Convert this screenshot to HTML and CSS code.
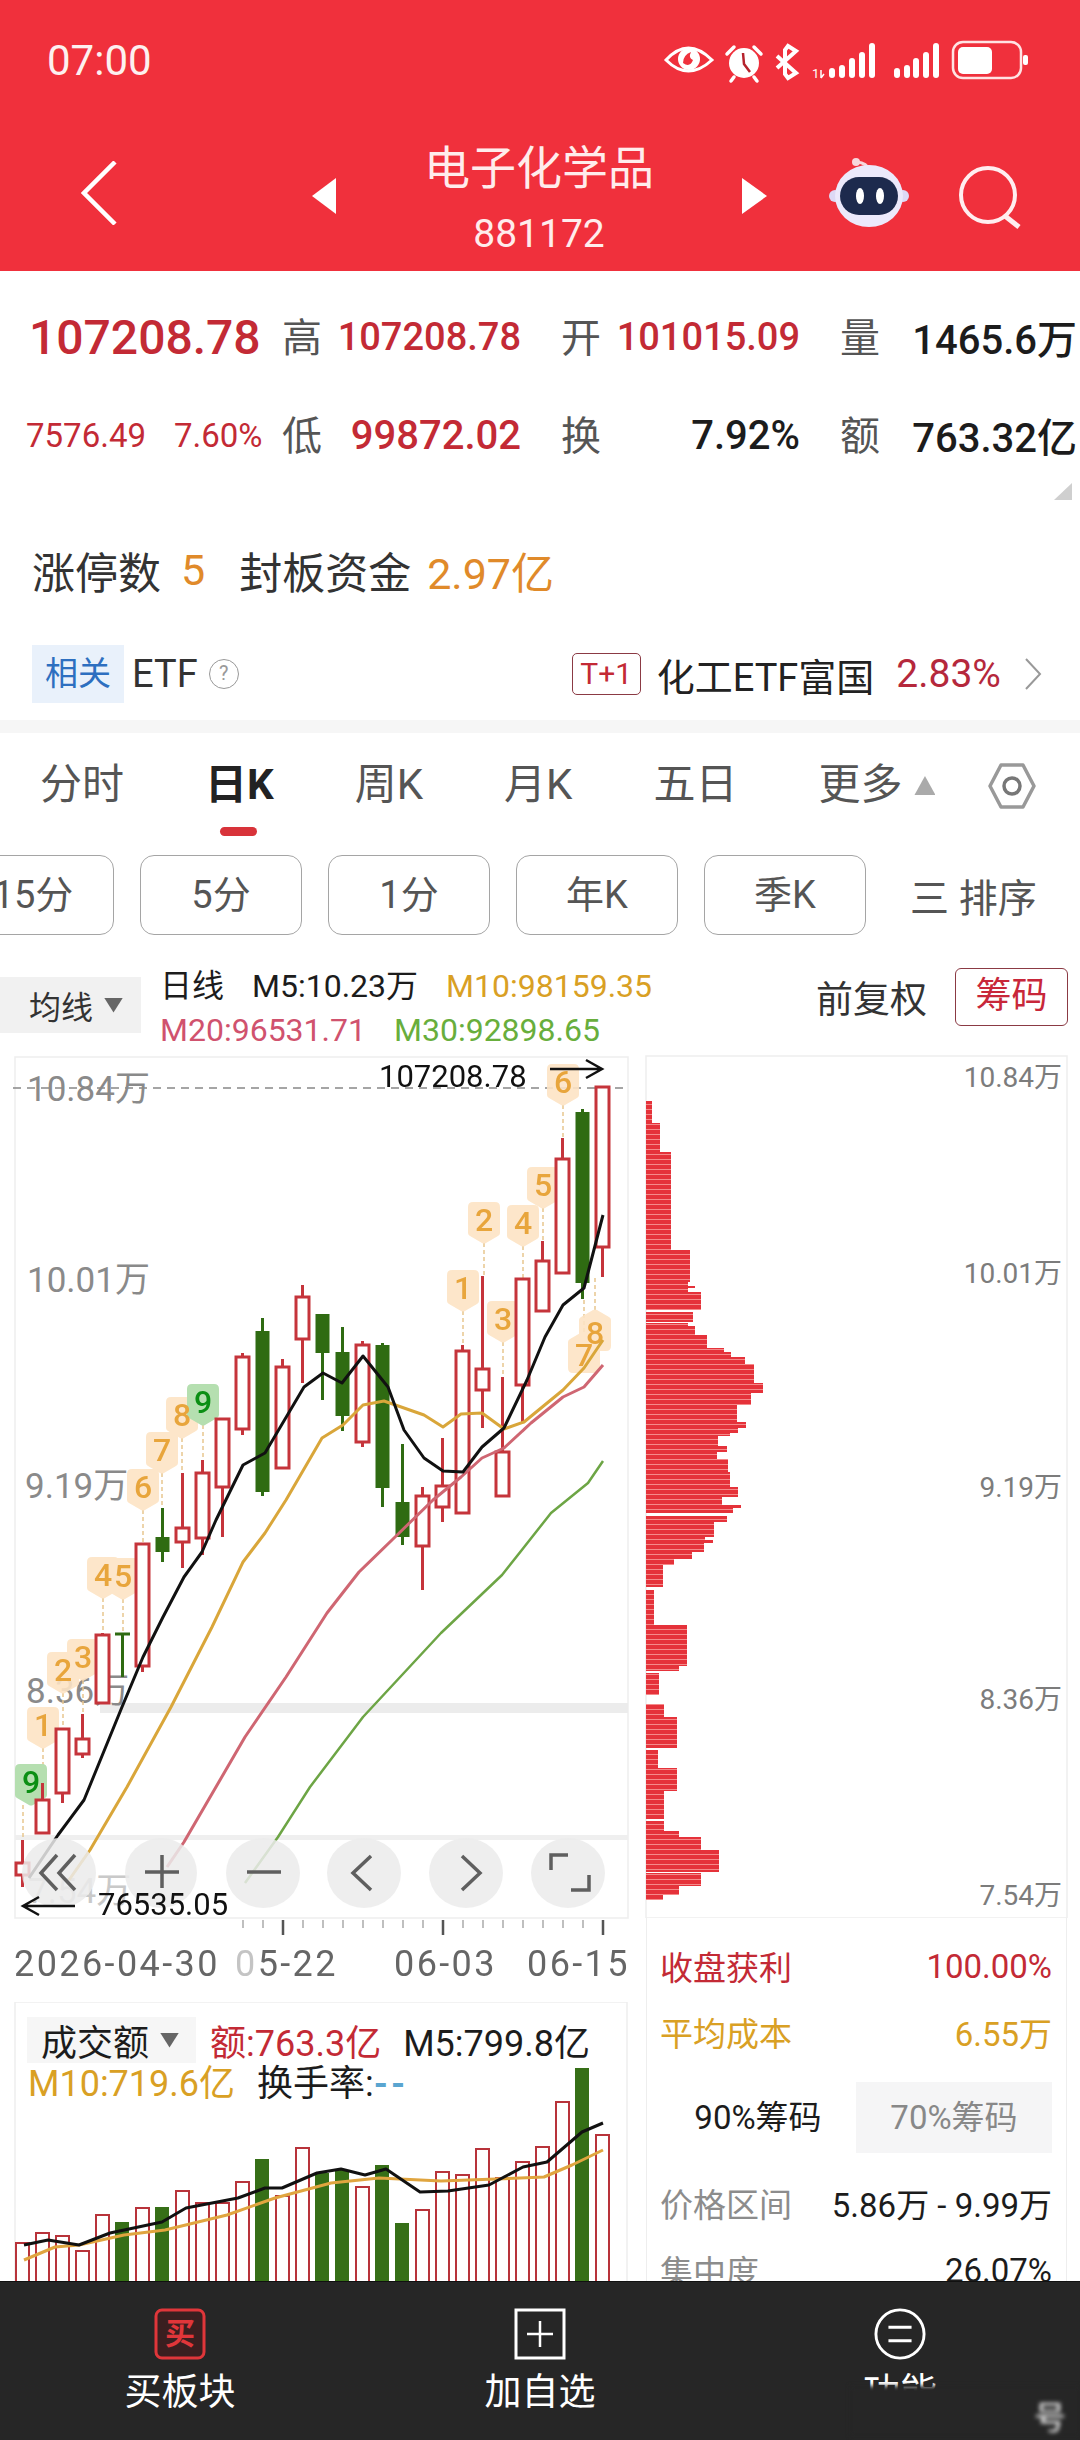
FILE: index.html
```html
<!DOCTYPE html>
<html lang="zh-CN">
<head>
  <meta charset="UTF-8" />
  <meta name="viewport" content="width=device-width, initial-scale=1.0" />
  <title>电子化学品 881172</title>
  <link rel="stylesheet" href="styles.css">
</head>
<body>
  <div class="pantalla">
    <header class="cabecera">
      <div class="estado">
        <span class="hora">07:00</span>
        <svg class="estado-iconos" width="400" height="60" viewBox="0 0 400 60">
          <path d="M16 30Q38 6 62 30Q38 52 16 30z" fill="none" stroke="#fff" stroke-width="3"/>
          <circle cx="39" cy="29" r="11" fill="#fff"/>
          <path d="M33 33q0-8 8-11q-3 6 2 8q-3 8-10 3z" fill="#f0303c"/>
          <path d="M77 24l7-7M111 24l-7-7M84 47l-3 4M104 47l3 4" stroke="#fff" stroke-width="3.5" stroke-linecap="round"/>
          <circle cx="94" cy="33" r="15" fill="#fff"/>
          <path d="M93 23l1 11l6 8" fill="none" stroke="#b5222c" stroke-width="2.5"/>
          <path d="M127 26l19 17l-8 5l-3-4v-24l3-4l8 5l-19 17" fill="none" stroke="#fff" stroke-width="4"/>
          <text x="162" y="48" class="red-chica">1</text>
          <path d="M171 40v8M174 44l-3 4" stroke="#fff" stroke-width="1.5" fill="none"/>
          <g fill="#fff">
            <rect x="179" y="38" width="6" height="10" rx="3"/>
            <rect x="189" y="35" width="6" height="13" rx="3"/>
            <rect x="199" y="28" width="6" height="20" rx="3"/>
            <rect x="209" y="22" width="6" height="26" rx="3"/>
            <rect x="219" y="13" width="6" height="35" rx="3"/>
            <rect x="244" y="38" width="6" height="10" rx="3"/>
            <rect x="254" y="35" width="6" height="13" rx="3"/>
            <rect x="263" y="28" width="6" height="20" rx="3"/>
            <rect x="273" y="22" width="6" height="26" rx="3"/>
            <rect x="283" y="13" width="6" height="35" rx="3"/>
            <rect x="308" y="17" width="34" height="27" rx="5"/>
            <rect x="373" y="25" width="5" height="10" rx="2"/>
          </g>
          <rect x="303" y="12" width="68" height="36" rx="10" fill="none" stroke="#ffe3e3" stroke-width="2.5"/>
        </svg>
      </div>
      <nav class="barra">
        <svg class="volver" width="36" height="64" viewBox="0 0 36 64">
          <path d="M34 1L3 32L34 63" fill="none" stroke="#fff" stroke-width="4.5"/>
        </svg>
        <span class="flecha flecha-izq"></span>
        <div class="titulo">
          <div class="titulo-nombre">电子化学品</div>
          <div class="titulo-codigo">881172</div>
        </div>
        <span class="flecha flecha-der"></span>
        <svg class="robot" width="80" height="72" viewBox="0 0 80 72">
          <path d="M40 12q-2-7-12-8" fill="none" stroke="#f7d7dd" stroke-width="3"/>
          <circle cx="27" cy="4" r="4" fill="#f7d7dd"/>
          <circle cx="6" cy="38" r="6" fill="#ddd9f5"/>
          <circle cx="74" cy="38" r="6" fill="#ddd9f5"/>
          <ellipse cx="40" cy="38" rx="34" ry="31" fill="#ece9fb"/>
          <rect x="11" y="19" width="58" height="38" rx="19" fill="#1d2a4d"/>
          <ellipse cx="31" cy="38" rx="4" ry="8" fill="#fff"/>
          <ellipse cx="51" cy="38" rx="4" ry="8" fill="#fff"/>
        </svg>
        <svg class="buscar" width="64" height="64" viewBox="0 0 64 64">
          <circle cx="29" cy="30" r="27" fill="none" stroke="#ffeef0" stroke-width="4"/>
          <path d="M46 51l14 11" stroke="#ffeef0" stroke-width="5"/>
        </svg>
      </nav>
    </header>

    <section class="cotizacion">
      <div class="fila-cot">
        <div class="precio">107208.78</div>
        <span class="et">高</span><b class="val rojo">107208.78</b><i></i>
        <span class="et">开</span><b class="val rojo">101015.09</b><i></i>
        <span class="et">量</span><b class="val negro val-g">1465.6万</b>
      </div>
      <div class="fila-cot fila-cot-2">
        <div class="cambio"><span>7576.49</span><span>7.60%</span></div>
        <span class="et">低</span><b class="val rojo val-g">99872.02</b><i></i>
        <span class="et">换</span><b class="val negro val-g">7.92%</b><i></i>
        <span class="et">额</span><b class="val negro val-g">763.32亿</b>
      </div>
      <div class="esquina"></div>
      <div class="limite">
        <span>涨停数</span><span class="naranja num-limite">5</span>
        <span class="fondos">封板资金</span><span class="naranja">2.97亿</span>
      </div>
      <div class="etf">
        <span class="etf-tag">相关</span>
        <span class="etf-txt">ETF</span>
        <span class="ayuda">?</span>
        <span class="t1">T+1</span>
        <span class="etf-nombre">化工ETF富国</span>
        <span class="etf-pct">2.83%</span>
        <svg width="18" height="32" viewBox="0 0 18 32">
          <path d="M2 1l14 15L2 31" fill="none" stroke="#999" stroke-width="2"/>
        </svg>
      </div>
    </section>

    <div class="separador"></div>

    <div class="tabs">
      <span>分时</span>
      <span class="tab-activa">日K</span>
      <span>周K</span>
      <span>月K</span>
      <span>五日</span>
      <span>更多</span>
      <span class="tri-mas"></span>
      <svg class="hexagono" width="48" height="46" viewBox="0 0 48 46">
        <path d="M13 2h22l11 21l-11 21H13L2 23z" fill="none" stroke="#999" stroke-width="3.5" stroke-linejoin="round"/>
        <circle cx="24" cy="23" r="8" fill="none" stroke="#777" stroke-width="3.5"/>
      </svg>
    </div>

    <div class="periodos">
      <span class="boton">15分</span>
      <span class="boton">5分</span>
      <span class="boton">1分</span>
      <span class="boton">年K</span>
      <span class="boton">季K</span>
      <span class="orden">三 排序</span>
    </div>

    <div class="leyenda">
      <div class="junxian">均线<span class="tri-abajo"></span></div>
      <div class="leyenda-ma">
        <div><span class="ma-nombre">日线</span><span>M5:10.23万</span><span class="oro">M10:98159.35</span></div>
        <div><span class="rosa">M20:96531.71</span><span class="verde">M30:92898.65</span></div>
      </div>
      <span class="fuquan">前复权</span>
      <span class="chouma">筹码</span>
    </div>

    <div class="graficos">
      <div class="col-izq">
        <svg class="kline" width="640" height="930" viewBox="0 1055 640 930">
          <defs>
            <path id="tag" d="M-16-13q0-5 5-5h22q5 0 5 5v26q0 2-2 3l-12 7q-2 1-4 0l-12-7q-2-1-2-3z"/>
          </defs>
          <rect x="15" y="1057" width="613" height="861" fill="none" stroke="#eee" stroke-width="1.5"/>
          <rect x="100" y="1703" width="528" height="10" fill="#ececec"/>
          <rect x="15" y="1835" width="613" height="5" fill="#efefef"/>
          <path d="M13 1088H628" stroke="#888" stroke-width="1.5" stroke-dasharray="8 6"/>

          <text class="eje" x="27" y="1101">10.84万</text>
          <text class="eje" x="27" y="1292">10.01万</text>
          <text class="eje" x="25" y="1498">9.19万</text>
          <text class="eje" x="26" y="1703">8.36万</text>
          <text class="eje eje-tenue" x="28" y="1903">7.54万</text>

          <path class="guia" d="M563 1105V1138M484 1243V1276M523 1246V1279M543 1208V1241M463 1311V1345M503 1342V1377M584 1332V1299M595 1310V1277M203 1425V1460M182 1438V1473M162 1473V1508M143 1510V1544M103 1598V1633M123 1599V1634M83 1680V1714M63 1693V1729M43 1748V1783M23 1805V1840"/>

          <g class="tag">
            <use href="#tag" x="563" y="1082"/>
            <use href="#tag" x="484" y="1220"/>
            <use href="#tag" x="523" y="1223"/>
            <use href="#tag" x="543" y="1185"/>
            <use href="#tag" x="463" y="1288"/>
            <use href="#tag" x="503" y="1319"/>
            <use href="#tag" transform="translate(584 1355) scale(1 -1)"/>
            <use href="#tag" transform="translate(595 1333) scale(1 -1)"/>
            <use href="#tag" x="182" y="1415"/>
            <use href="#tag" x="162" y="1450"/>
            <use href="#tag" x="143" y="1487"/>
            <use href="#tag" x="103" y="1575"/>
            <use href="#tag" x="123" y="1576"/>
            <use href="#tag" x="83" y="1657"/>
            <use href="#tag" x="63" y="1670"/>
            <use href="#tag" x="43" y="1725"/>
          </g>
          <g class="tag-v">
            <use href="#tag" x="203" y="1402"/>
            <use href="#tag" x="31" y="1782"/>
          </g>
          <g class="tag-num">
            <text x="563" y="1093">6</text>
            <text x="484" y="1231">2</text>
            <text x="523" y="1234">4</text>
            <text x="543" y="1196">5</text>
            <text x="463" y="1299">1</text>
            <text x="503" y="1330">3</text>
            <text x="584" y="1366">7</text>
            <text x="595" y="1344">8</text>
            <text x="182" y="1426">8</text>
            <text x="162" y="1461">7</text>
            <text x="143" y="1498">6</text>
            <text x="103" y="1586">4</text>
            <text x="123" y="1587">5</text>
            <text x="83" y="1668">3</text>
            <text x="63" y="1681">2</text>
            <text x="43" y="1736">1</text>
          </g>
          <g class="tag-num tag-num-v">
            <text x="203" y="1413">9</text>
            <text x="31" y="1793">9</text>
          </g>

          <path class="mecha-r" d="M22.5 1840V1887M42.5 1783V1833M62.5 1793V1803M82.5 1714V1758M102.5 1633V1703M142.5 1666V1672M182.5 1473V1568M202.5 1460V1555M222.5 1487V1537M242.5 1353V1435M282.5 1359V1468M302.5 1285V1383M362.5 1341V1447M422.5 1487V1590M442.5 1438V1522M462.5 1345V1513M482.5 1276V1428M502.5 1377V1496M522.5 1279V1422M542.5 1241V1311M562.5 1138V1273M602.5 1247V1277"/>
          <path class="mecha-v" d="M122.5 1634V1677M115 1634H130M162.5 1508V1562M262.5 1318V1496M322.5 1353V1400M342.5 1327V1431M382.5 1343V1507M402.5 1444V1545M582.5 1109V1299"/>
          <g class="vela-r">
            <rect x="16" y="1863" width="13" height="12"/>
            <rect x="36" y="1800" width="13" height="33"/>
            <rect x="56" y="1729" width="13" height="64"/>
            <rect x="76" y="1739" width="13" height="15"/>
            <rect x="96" y="1635" width="13" height="68"/>
            <rect x="136" y="1544" width="13" height="122"/>
            <rect x="176" y="1528" width="13" height="14"/>
            <rect x="196" y="1473" width="13" height="65"/>
            <rect x="216" y="1419" width="13" height="68"/>
            <rect x="236" y="1357" width="13" height="72"/>
            <rect x="276" y="1367" width="13" height="101"/>
            <rect x="296" y="1297" width="13" height="42"/>
            <rect x="356" y="1345" width="13" height="97"/>
            <rect x="416" y="1496" width="13" height="50"/>
            <rect x="436" y="1486" width="13" height="21"/>
            <rect x="456" y="1351" width="13" height="162"/>
            <rect x="476" y="1369" width="13" height="21"/>
            <rect x="496" y="1452" width="13" height="44"/>
            <rect x="516" y="1279" width="13" height="106"/>
            <rect x="536" y="1261" width="13" height="50"/>
            <rect x="556" y="1159" width="13" height="114"/>
            <rect x="596" y="1087" width="13" height="160"/>
          </g>
          <g class="vela-v">
            <rect x="155.5" y="1537" width="14" height="15"/>
            <rect x="255.5" y="1331" width="14" height="161"/>
            <rect x="315.5" y="1314" width="14" height="39"/>
            <rect x="335.5" y="1352" width="14" height="64"/>
            <rect x="375.5" y="1345" width="14" height="143"/>
            <rect x="395.5" y="1502" width="14" height="35"/>
            <rect x="575.5" y="1112" width="14" height="171"/>
          </g>

          <path class="ma30" d="M245 1883L278 1837L310 1787L363 1717L441 1633L502 1575L551 1513L588 1483L603 1461"/>
          <path class="ma20" d="M167 1867L184 1842L245 1737L286 1677L327 1613L359 1572L392 1540L433 1500L461 1477L482 1458L504 1448L531 1423L563 1397L584 1387L603 1365"/>
          <path class="ma10" d="M69 1880L90 1850L127 1787L171 1707L212 1627L243 1562L265 1533L286 1500L322 1438L343 1425L363 1405L384 1401L424 1415L443 1427L461 1414L482 1413L504 1429L524 1422L563 1390L584 1368L603 1340"/>
          <path class="ma5" d="M29 1878L58 1835L84 1800L122 1707L143 1657L163 1617L184 1577L202 1552L216 1520L243 1465L265 1453L304 1387L323 1373L342 1383L363 1356L388 1387L404 1430L424 1458L443 1471L463 1472L482 1447L504 1428L527 1380L545 1337L563 1305L584 1288L603 1215"/>

          <g class="control">
            <ellipse cx="59" cy="1873" rx="37" ry="35"/>
            <ellipse cx="161" cy="1873" rx="36" ry="35"/>
            <ellipse cx="263" cy="1873" rx="37" ry="35"/>
            <ellipse cx="364" cy="1873" rx="37" ry="35"/>
            <ellipse cx="466" cy="1873" rx="37" ry="35"/>
            <ellipse cx="568" cy="1873" rx="37" ry="35"/>
          </g>
          <path class="control-ico" d="M57 1855L41 1873L57 1890M75 1855L59 1873L75 1890M145 1872H179M162 1855V1888M247 1872H281M371 1856L353 1873L371 1890M462 1856L480 1873L462 1890M551 1870V1855H568M571 1890H589V1875"/>

          <text class="marca" x="379" y="1087">107208.78</text>
          <path class="marca-flecha" d="M550 1069H602M586 1060L602 1069L586 1078"/>
          <text class="marca" x="98" y="1915">76535.05</text>
          <path class="marca-flecha" d="M23 1906H75M39 1897L23 1906L39 1915"/>

          <path class="rayita" d="M243 1920V1928M263 1920V1928M303 1920V1928M323 1920V1928M343 1920V1928M363 1920V1928M383 1920V1928M403 1920V1928M423 1920V1928M463 1920V1928M483 1920V1928M503 1920V1928M523 1920V1928M543 1920V1928M563 1920V1928M583 1920V1928"/>
          <path class="rayita-g" d="M283 1920V1935M443 1920V1935M603 1920V1935"/>
          <text class="fecha" x="14" y="1976">2026-04-30</text>
          <text class="fecha" x="235" y="1976"><tspan class="fecha-tenue">0</tspan>5-22</text>
          <text class="fecha" x="394" y="1976">06-03</text>
          <text class="fecha" x="527" y="1976">06-15</text>
        </svg>

        <div class="volumen">
          <svg width="640" height="279" viewBox="0 2002 640 279">
            <path d="M15 2290V2002H627V2290" fill="none" stroke="#eee" stroke-width="1.5"/>
            <g class="vol-r">
              <rect x="16" y="2243" width="13" height="50"/>
              <rect x="36" y="2233" width="13" height="60"/>
              <rect x="56" y="2236" width="13" height="57"/>
              <rect x="76" y="2251" width="13" height="42"/>
              <rect x="96" y="2215" width="13" height="78"/>
              <rect x="136" y="2208" width="13" height="85"/>
              <rect x="176" y="2191" width="13" height="102"/>
              <rect x="196" y="2203" width="13" height="90"/>
              <rect x="216" y="2203" width="13" height="90"/>
              <rect x="236" y="2182" width="13" height="111"/>
              <rect x="276" y="2196" width="13" height="97"/>
              <rect x="296" y="2148" width="13" height="145"/>
              <rect x="356" y="2187" width="13" height="106"/>
              <rect x="416" y="2210" width="13" height="83"/>
              <rect x="436" y="2172" width="13" height="121"/>
              <rect x="456" y="2175" width="13" height="118"/>
              <rect x="476" y="2149" width="13" height="144"/>
              <rect x="496" y="2178" width="13" height="115"/>
              <rect x="516" y="2162" width="13" height="131"/>
              <rect x="536" y="2147" width="13" height="146"/>
              <rect x="556" y="2102" width="13" height="191"/>
              <rect x="596" y="2135" width="13" height="158"/>
            </g>
            <g class="vol-v">
              <rect x="115" y="2222" width="14" height="70"/>
              <rect x="155" y="2207" width="14" height="85"/>
              <rect x="255" y="2159" width="14" height="133"/>
              <rect x="315" y="2173" width="14" height="119"/>
              <rect x="335" y="2170" width="14" height="122"/>
              <rect x="375" y="2165" width="14" height="127"/>
              <rect x="395" y="2223" width="14" height="69"/>
              <rect x="575" y="2068" width="14" height="224"/>
            </g>
            <path class="vol-ma10" d="M24 2260L55 2247L79 2245L124 2235L165 2230L227 2215L275 2198L331 2183L379 2178L441 2181L496 2179L544 2177L572 2165L603 2150"/>
            <path class="vol-ma5" d="M24 2245L48 2240L79 2245L110 2233L162 2222L186 2208L238 2198L265 2188L282 2188L317 2173L341 2169L365 2175L386 2169L420 2192L448 2191L489 2185L523 2167L547 2162L582 2132L603 2123"/>
          </svg>
          <div class="vol-leyenda">
            <div class="vol-fila">
              <span class="vol-tipo">成交额<span class="tri-abajo"></span></span>
              <span class="rojo">额:763.3亿</span>
              <span>M5:799.8亿</span>
            </div>
            <div class="vol-fila vol-fila-2">
              <span class="oro">M10:719.6亿</span>
              <span>换手率:<span class="azul">--</span></span>
            </div>
          </div>
        </div>
      </div>

      <div class="col-der">
        <svg class="chip" width="440" height="863" viewBox="640 1055 440 863">
          <defs>
            <pattern id="rayas" patternUnits="userSpaceOnUse" width="10" height="5">
              <rect width="10" height="5" fill="#e5323a"/>
              <rect y="4" width="10" height="1" fill="#f58a8a"/>
            </pattern>
          </defs>
          <rect x="646" y="1056" width="421" height="862" fill="none" stroke="#eee" stroke-width="1.5"/>
          <path fill="url(#rayas)" d="M646 1101h6v22h-6zM646 1123h14v29h-14zM646 1152h25v98h-25zM646 1250h44v32h-44zM646 1282h42v4h-42zM646 1286h49v2h-49zM646 1288h42v4h-42zM646 1292h55v18h-55zM646 1312h47v10h-47zM646 1323h42v3h-42zM646 1326h49v9h-49zM646 1335h61v13h-61zM646 1348h78v4h-78zM646 1352h85v5h-85zM646 1357h99v7h-99zM646 1364h108v19h-108zM646 1383h117v10h-117zM646 1393h105v12h-105zM646 1405h91v17h-91zM646 1422h100v6h-100zM646 1428h92v5h-92zM646 1433h84v3h-84zM646 1436h72v10h-72zM646 1446h81v6h-81zM646 1452h71v7h-71zM646 1459h82v13h-82zM646 1472h84v15h-84zM646 1487h92v10h-92zM646 1497h76v8h-76zM646 1505h95v3h-95zM646 1508h87v5h-87zM646 1516h81v6h-81zM646 1522h68v15h-68zM646 1537h59v3h-59zM646 1540h67v3h-67zM646 1543h58v9h-58zM646 1552h46v7h-46zM646 1559h28v6h-28zM646 1565h17v22h-17zM646 1590h8v35h-8zM646 1625h41v41h-41zM646 1666h33v5h-33zM646 1673h13v22h-13zM646 1704h18v13h-18zM646 1717h31v31h-31zM646 1750h12v18h-12zM646 1768h31v23h-31zM646 1791h18v28h-18zM646 1821h18v10h-18zM646 1831h33v6h-33zM646 1837h55v13h-55zM646 1850h73v22h-73zM646 1873h55v13h-55zM646 1886h33v9h-33zM646 1895h17v5h-17z"/>
          <text class="eje-der" x="1062" y="1087">10.84万</text>
          <text class="eje-der" x="1062" y="1283">10.01万</text>
          <text class="eje-der" x="1062" y="1497">9.19万</text>
          <text class="eje-der" x="1062" y="1709">8.36万</text>
          <text class="eje-der" x="1062" y="1905">7.54万</text>
        </svg>
        <div class="stats">
          <div class="stat"><span class="rojo">收盘获利</span><span class="rojo">100.00%</span></div>
          <div class="stat stat-2"><span class="oro">平均成本</span><span class="oro">6.55万</span></div>
          <div class="chip-tabs">
            <span>90%筹码</span>
            <span class="chip-tab-off">70%筹码</span>
          </div>
          <div class="stat stat-3"><span class="gris">价格区间</span><span>5.86万 - 9.99万</span></div>
          <div class="stat stat-4"><span class="gris">集中度</span><span>26.07%</span></div>
        </div>
      </div>
    </div>

    <footer class="pie">
      <div class="pie-item">
        <svg width="52" height="52" viewBox="0 0 52 52">
          <rect x="2" y="2" width="48" height="48" rx="6" fill="#3a1f20" stroke="#e0363a" stroke-width="3"/>
        </svg>
        <span class="pie-mai">买</span>
        <span class="pie-txt">买板块</span>
      </div>
      <div class="pie-item">
        <svg width="52" height="52" viewBox="0 0 52 52">
          <rect x="2" y="2" width="48" height="48" fill="none" stroke="#fff" stroke-width="3"/>
          <path d="M26 13V39M13 26H39" stroke="#fff" stroke-width="2.5"/>
        </svg>
        <span class="pie-txt">加自选</span>
      </div>
      <div class="pie-item">
        <svg width="54" height="54" viewBox="0 0 54 54">
          <circle cx="27" cy="27" r="25" fill="none" stroke="#fff" stroke-width="3"/>
          <path d="M15 20H39M15 34H39" stroke="#fff" stroke-width="3"/>
        </svg>
        <span class="pie-txt">功能</span>
        <div class="mancha"><span>号</span></div>
      </div>
    </footer>
  </div>
</body>
</html>
```

FILE: styles.css
```css
* {
  box-sizing: border-box;
}

body {
  margin: 0;
  padding: 0;
  background: #fff;
  font-family: Roboto, "Noto Sans CJK SC", sans-serif;
  color: #1c1c1c;
}

.pantalla {
  width: 1080px;
  height: 2440px;
  overflow: hidden;
  display: flex;
  flex-direction: column;
}

.rojo { color: #c32a35; }
.negro { color: #1c1c1c; }
.naranja { color: #e08a2a; }
.oro { color: #d9a024; }
.rosa { color: #d0526e; }
.verde { color: #68ae3c; }
.gris { color: #8c8c8c; }
.azul { color: #5aa5d0; font-weight: 700; letter-spacing: 3px; }

/* cabecera */
.cabecera {
  height: 271px;
  background: #f0303c;
  color: #fff;
  flex: none;
}

.estado {
  height: 140px;
  display: flex;
  justify-content: space-between;
  padding: 30px 30px 0 47px;
}

.hora {
  font-size: 42px;
  line-height: 62px;
  color: #fdf0f0;
}

.estado-iconos {
  display: block;
}

.red-chica {
  font-size: 13px;
  fill: #fff;
}

.barra {
  display: flex;
  align-items: flex-start;
  padding-left: 81px;
}

.volver {
  margin-top: 21px;
  margin-right: 195px;
}

.flecha {
  width: 0;
  height: 0;
  margin-top: 38px;
  border-top: 18px solid transparent;
  border-bottom: 18px solid transparent;
}

.flecha-izq {
  border-right: 24px solid #fff;
}

.flecha-der {
  border-left: 25px solid #fff;
}

.titulo {
  width: 406px;
  text-align: center;
}

.titulo-nombre {
  font-size: 46px;
  line-height: 56px;
  color: #ffecec;
}

.titulo-codigo {
  margin-top: 15px;
  font-size: 39px;
  line-height: 46px;
  color: #ffecec;
}

.robot {
  margin-top: 18px;
  margin-left: 62px;
}

.buscar {
  margin-top: 25px;
  margin-left: 50px;
}

/* cotizacion */
.cotizacion {
  height: 449px;
  padding-top: 36px;
  flex: none;
}

.fila-cot {
  display: grid;
  grid-template-columns: 282px 50px 189px 40px 50px 189px 40px 50px 187px;
  align-items: center;
  height: 60px;
}

.fila-cot-2 {
  margin-top: 38px;
}

.precio {
  padding-left: 29px;
  font-size: 48px;
  font-weight: 500;
  color: #c32a35;
}

.cambio {
  display: flex;
  gap: 28px;
  padding-left: 26px;
  font-size: 33px;
  color: #c32a35;
}

.et {
  margin-top: -4px;
  font-size: 40px;
  color: #555;
}

.val {
  font-size: 38px;
  font-weight: 500;
  text-align: right;
}

.val-g {
  font-size: 40px;
}

.esquina {
  width: 18px;
  height: 17px;
  margin: 18px 8px 0 auto;
  background: #cfcfcf;
  clip-path: polygon(100% 0, 100% 100%, 0 100%);
}

.limite {
  display: flex;
  align-items: center;
  height: 50px;
  margin-top: 45px;
  padding-left: 32px;
  font-size: 43px;
  color: #333;
}

.limite .naranja {
  color: #e08a2a;
}

.num-limite {
  margin-left: 20px;
}

.fondos {
  margin: 0 16px 0 34px;
}

.etf {
  display: flex;
  align-items: center;
  height: 58px;
  margin-top: 50px;
  padding-left: 32px;
  font-size: 38px;
}

.etf-tag {
  width: 92px;
  height: 58px;
  background: #e9f1fb;
  color: #2d6fc0;
  font-size: 33px;
  line-height: 58px;
  text-align: center;
}

.etf-txt {
  margin-left: 8px;
  color: #333;
}

.ayuda {
  width: 30px;
  height: 30px;
  margin-left: 11px;
  border: 1.5px solid #999;
  border-radius: 50%;
  color: #999;
  font-size: 20px;
  line-height: 27px;
  text-align: center;
}

.t1 {
  width: 69px;
  height: 42px;
  margin-left: 333px;
  border: 1px solid #8b3a44;
  border-radius: 5px;
  color: #c32a35;
  font-size: 30px;
  line-height: 39px;
  text-align: center;
}

.etf-nombre {
  margin-left: 16px;
  color: #222;
}

.etf-pct {
  margin-left: 22px;
  margin-right: 23px;
  font-size: 39px;
  color: #b5283c;
}

/* pestañas */
.separador {
  height: 13px;
  background: #f6f6f6;
  flex: none;
}

.tabs {
  display: flex;
  align-items: flex-start;
  gap: 81px;
  height: 104px;
  padding: 28px 0 0 40px;
  font-size: 42px;
  line-height: 48px;
  color: #555;
  flex: none;
}

.tab-activa {
  position: relative;
  font-weight: 700;
  color: #222;
}

.tab-activa::after {
  content: "";
  position: absolute;
  left: 15px;
  top: 66px;
  width: 37px;
  height: 9px;
  border-radius: 5px;
  background: #d8333a;
}

.tri-mas {
  width: 21px;
  height: 19px;
  margin: 15px 0 0 -69px;
  background: #aaa;
  clip-path: polygon(50% 0, 100% 100%, 0 100%);
}

.hexagono {
  margin-left: -28px;
  margin-top: 2px;
}

.periodos {
  display: flex;
  align-items: center;
  gap: 26px;
  height: 80px;
  margin-top: 18px;
  margin-left: -48px;
  flex: none;
  width: 1200px;
}

.boton {
  width: 162px;
  height: 80px;
  border: 1px solid #a5a5a5;
  border-radius: 14px;
  font-size: 38px;
  line-height: 78px;
  text-align: center;
  color: #555;
}

.orden {
  margin-left: 18px;
  font-size: 39px;
  color: #555;
}

/* leyenda */
.leyenda {
  display: flex;
  align-items: flex-start;
  height: 91px;
  margin-top: 29px;
  flex: none;
}

.junxian {
  display: flex;
  align-items: center;
  width: 141px;
  height: 56px;
  margin-top: 13px;
  padding-left: 29px;
  background: #f1f1f1;
  font-size: 32px;
  color: #333;
}

.tri-abajo {
  display: inline-block;
  width: 19px;
  height: 15px;
  margin-left: 11px;
  background: #666;
  clip-path: polygon(0 0, 100% 0, 50% 100%);
}

.leyenda-ma {
  width: 675px;
  padding-left: 19px;
  font-size: 32px;
  line-height: 44px;
}

.leyenda-ma div {
  display: flex;
  gap: 28px;
  height: 44px;
}

.ma-nombre {
  font-size: 32px;
}

.fuquan {
  font-size: 37px;
  line-height: 48px;
  margin-top: 13px;
  color: #333;
}

.chouma {
  width: 113px;
  height: 58px;
  margin-top: 4px;
  margin-left: 28px;
  border: 1.5px solid #8b3a44;
  border-radius: 6px;
  color: #c8273a;
  font-size: 36px;
  line-height: 54px;
  text-align: center;
}

/* graficos */
.graficos {
  display: grid;
  grid-template-columns: 640px 440px;
  height: 1226px;
  overflow: hidden;
  flex: none;
}

.kline,
.chip {
  display: block;
}

.eje {
  font-size: 35px;
  fill: #8a8a8a;
}

.eje-tenue {
  fill: #c9c9c9;
}

.guia {
  stroke: #e8c68e;
  stroke-width: 1.5;
  stroke-dasharray: 4 3;
  fill: none;
}

.tag {
  fill: #fde4c4;
  opacity: .9;
}

.tag-v {
  fill: #b5dfb0;
}

.tag-num {
  font-size: 32px;
  font-weight: 500;
  fill: #e8a53c;
  text-anchor: middle;
}

.tag-num-v {
  fill: #0b8f14;
}

.mecha-r {
  stroke: #c5343b;
  stroke-width: 3;
  fill: none;
}

.mecha-v {
  stroke: #2f6b12;
  stroke-width: 3;
  fill: none;
}

.vela-r rect {
  fill: #fff;
  stroke: #c5343b;
  stroke-width: 3;
}

.vela-v rect {
  fill: #2f6b12;
}

.ma5,
.ma10,
.ma20,
.ma30,
.vol-ma5,
.vol-ma10 {
  fill: none;
  stroke-linejoin: round;
}

.ma5 { stroke: #111; stroke-width: 3; }
.ma10 { stroke: #d9a63a; stroke-width: 3; }
.ma20 { stroke: #cf6672; stroke-width: 3; }
.ma30 { stroke: #6da545; stroke-width: 2.5; }

.control ellipse {
  fill: #ebebeb;
  opacity: .85;
}

.control-ico {
  fill: none;
  stroke: #5f5f5f;
  stroke-width: 3.5;
}

.marca {
  font-size: 31px;
  fill: #111;
}

.marca-flecha {
  fill: none;
  stroke: #111;
  stroke-width: 2.5;
}

.rayita {
  stroke: #aaa;
  stroke-width: 1.5;
}

.rayita-g {
  stroke: #555;
  stroke-width: 2.5;
}

.fecha {
  font-size: 36px;
  letter-spacing: 2.4px;
  fill: #666;
}

.fecha-tenue {
  fill: #c4c4c4;
}

/* volumen */
.volumen {
  position: relative;
  height: 279px;
  margin-top: 17px;
  overflow: hidden;
}

.volumen svg {
  display: block;
}

.vol-r rect {
  fill: #fff;
  stroke: #b8333a;
  stroke-width: 2;
}

.vol-v rect {
  fill: #366f17;
}

.vol-ma5 { stroke: #111; stroke-width: 3; }
.vol-ma10 { stroke: #e0a53f; stroke-width: 3; }

.vol-leyenda {
  position: absolute;
  left: 27px;
  top: 15px;
  font-size: 36px;
}

.vol-fila {
  display: flex;
  align-items: center;
  height: 46px;
  gap: 22px;
}

.vol-fila-2 {
  margin-left: 1px;
  height: 34px;
}

.vol-tipo {
  display: flex;
  align-items: center;
  width: 169px;
  height: 46px;
  padding-left: 14px;
  background: #f6f6f6;
  font-size: 36px;
  margin-right: -8px;
}

/* columna derecha */
.stats {
  width: 421px;
  height: 363px;
  margin-left: 6px;
  padding: 23px 14px 0 13px;
  border-left: 1.5px solid #eee;
  border-right: 1.5px solid #eee;
  font-size: 33px;
}

.eje-der {
  font-size: 28px;
  fill: #7c7c7c;
  text-anchor: end;
}

.stat {
  display: flex;
  align-items: center;
  justify-content: space-between;
  height: 50px;
}

.stat-2 { margin-top: 16px; }
.stat-3 { margin-top: 25px; }
.stat-4 { margin-top: 17px; }

.chip-tabs {
  display: flex;
  height: 71px;
  margin-top: 25px;
  line-height: 71px;
  text-align: center;
}

.chip-tabs span {
  width: 197px;
}

.chip-tab-off {
  background: #f5f5f6;
  color: #888;
}

/* pie */
.pie {
  position: relative;
  z-index: 1;
  display: grid;
  grid-template-columns: repeat(3, 360px);
  height: 159px;
  padding-top: 26px;
  background: #262626;
  border-top: 1px solid #111;
  flex: none;
  color: #fff;
}

.pie-item {
  position: relative;
  display: flex;
  flex-direction: column;
  align-items: center;
}

.pie-item svg {
  display: block;
  height: 52px;
}

.pie-mai {
  position: absolute;
  top: 6px;
  left: 165px;
  width: 30px;
  color: #e0363a;
  font-size: 30px;
  font-weight: 700;
  line-height: 40px;
  text-align: center;
}

.pie-txt {
  margin-top: 11px;
  font-size: 37px;
  line-height: 44px;
}

/* borrón de la marca de agua sobre el pie */
.mancha {
  position: absolute;
  left: 130px;
  top: 78px;
  width: 230px;
  height: 50px;
  padding: 6px 14px 0 0;
  background: #262626;
  filter: blur(2px);
  font-size: 32px;
  text-align: right;
  white-space: nowrap;
}
```
